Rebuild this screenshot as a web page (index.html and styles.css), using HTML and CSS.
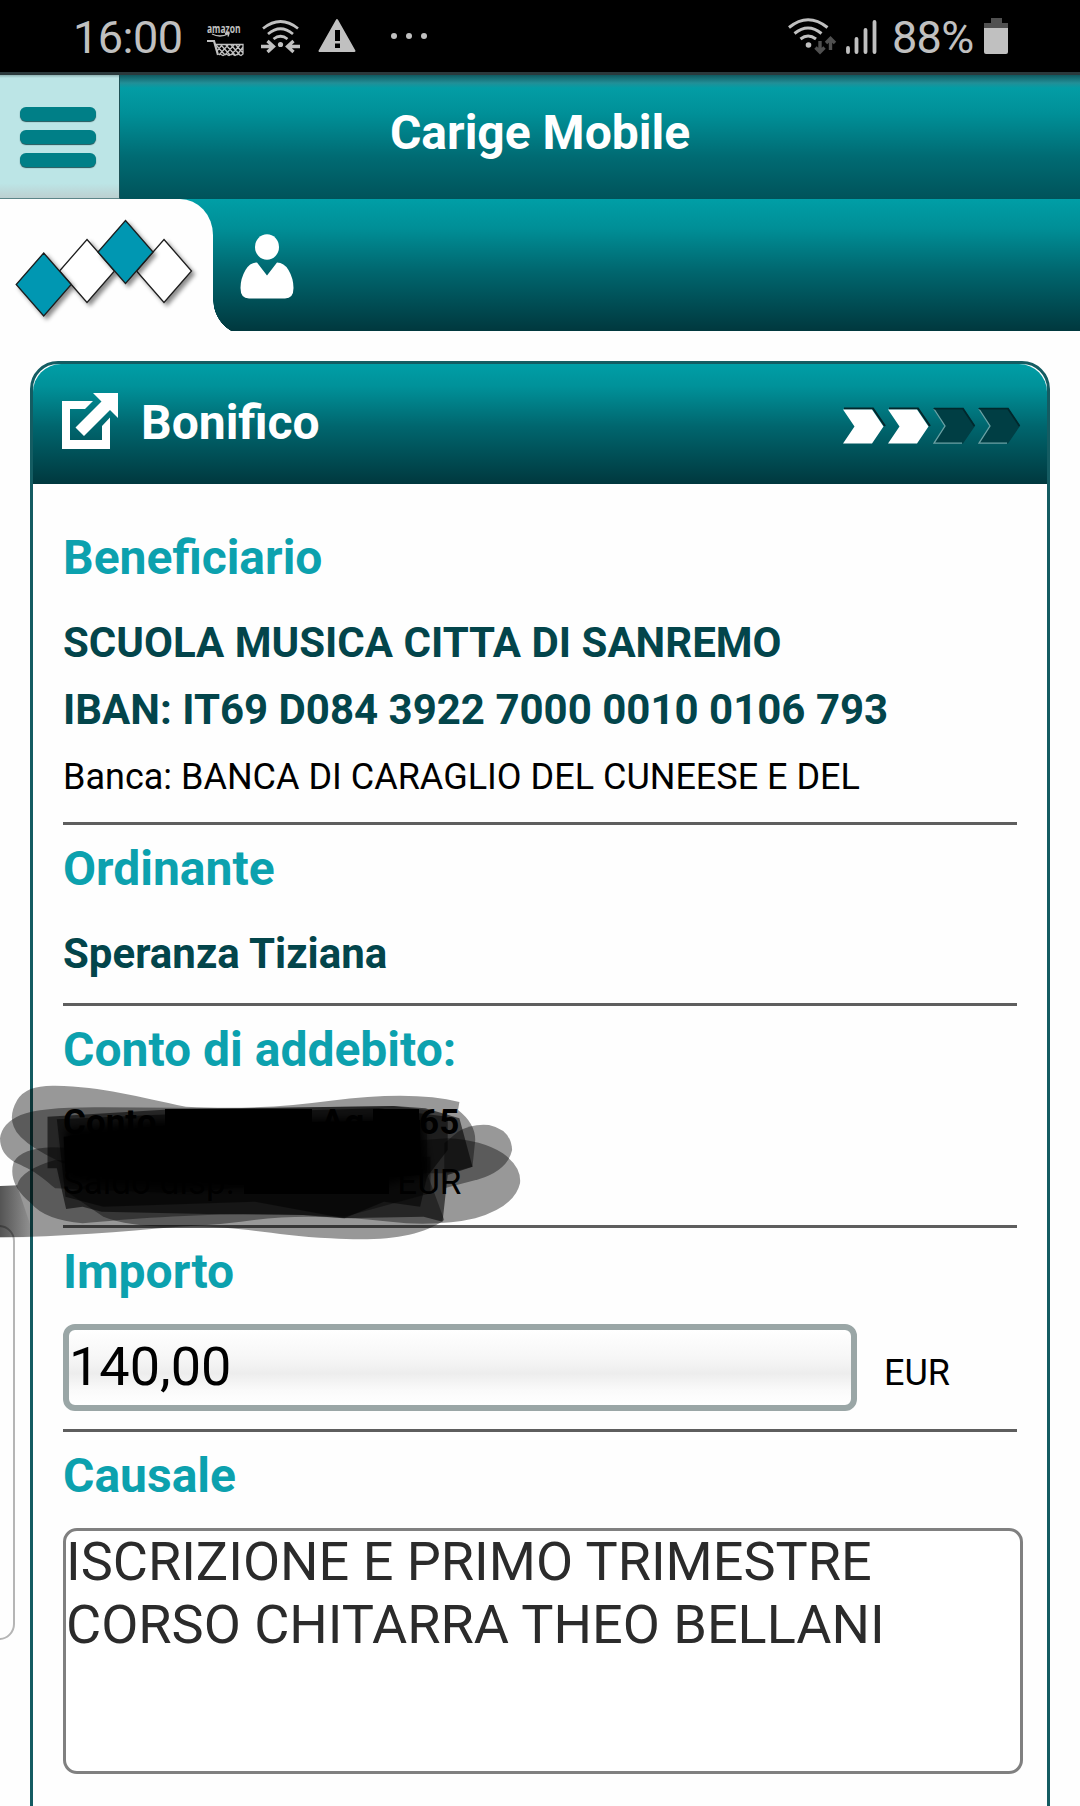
FILE: index.html
```html
<!DOCTYPE html>
<html lang="it">
<head>
    <meta charset="UTF-8">
    <meta name="viewport" content="width=device-width, initial-scale=1.0">
    <title>Carige Mobile</title>
    <link rel="stylesheet" href="styles.css">
</head>
<body>
    <div class="statusbar">
        <div class="status-left">
            <span class="clock">16:00</span>
            <svg class="ico-cart" width="38" height="40" viewBox="206 18 38 40">
                <text x="207" y="32.500" textLength="33.500" lengthAdjust="spacingAndGlyphs">amazon</text>
                <path d="M212 34q8 4 16 0M225 33.500h4l-1 3" fill="none" stroke="#c0c0c0" stroke-width="1.300"/>
                <path d="M207 41h7l4 14" fill="none" stroke="#c0c0c0" stroke-width="2.200"/>
                <path d="M214.500 44.500H243V54l-2 1.500-3-1.500-3 1.500-3-1.500-3 1.500-3-1.500-3 1.500-3-1.500M216 45l9 10M221 45l9 10M226 45l9 10M231 45l9 10M236 45l7 8M222 45l-5 6M228 45l-9 10M234 45l-9 10M240 45l-9 10M243 47l-6 8" fill="none" stroke="#c0c0c0" stroke-width="1.300"/>
            </svg>
            <svg class="ico-hotspot" width="40" height="40" viewBox="261 18 40 40" fill="none" stroke="#c0c0c0" stroke-width="2.700">
                <path d="M263 28.500q17.500-14 35 0M268 34q12.500-10.500 25 0M273.500 39q7-5.500 14 0"/>
                <circle cx="280.500" cy="44.500" r="2.600" fill="#c0c0c0" stroke="none"/>
                <path d="M261 46.500h12M267.500 41l6 5.500-6 5.500M300 46.500h-12M293.500 41l-6 5.500 6 5.500" stroke-width="3.300"/>
            </svg>
            <svg class="ico-warn" width="38" height="40" viewBox="318 18 38 40">
                <path d="M337 20l17.500 31h-35z" fill="#c0c0c0" stroke="#c0c0c0" stroke-width="2" stroke-linejoin="round"/>
                <path d="M335 30h5v11h-5zM335 43.500h5v4.500h-5z" fill="#000"/>
            </svg>
            <svg class="ico-dots" width="40" height="40" viewBox="389 18 40 40" fill="#c0c0c0">
                <circle cx="394" cy="36" r="3"/><circle cx="409" cy="36" r="3"/><circle cx="424" cy="36" r="3"/>
            </svg>
        </div>
        <div class="status-right">
            <svg width="50" height="40" viewBox="787 18 50 40" fill="none" stroke="#c0c0c0" stroke-width="3">
                <path d="M789 27.500q19-15.500 38.500 0M794.500 33.500q13.500-11 27 0M800.500 39q7.500-6 15.500 0"/>
                <circle cx="808.500" cy="45" r="2.800" fill="#c0c0c0" stroke="none"/>
                <path d="M820 41v11M815.500 47.500l4.500 4.500 4.500-4.500M830.500 50V39M826 43l4.500-4.500L835 43" stroke="#505050" stroke-width="3.400"/>
            </svg>
            <svg class="ico-signal" width="32" height="40" viewBox="846 18 32 40" stroke="#c0c0c0" stroke-width="3.800" stroke-linecap="round">
                <path d="M848 48v4M856.500 39v13M865.500 30v22M874.500 22v30"/>
            </svg>
            <span class="percent">88%</span>
            <svg width="26" height="40" viewBox="983 18 26 40">
                <path d="M991 18h11v5h6v6h-24v-6h7z" fill="#505050"/>
                <path d="M984 28h24v24q0 2-2 2h-20q-2 0-2-2z" fill="#c0c0c0"/>
            </svg>
        </div>
    </div>

    <header>
        <button class="menu"><span></span><span></span><span></span></button>
        <h1>Carige Mobile</h1>
    </header>

    <nav>
        <div class="logo">
            <svg width="213" height="132" viewBox="0 199 213 132" stroke="#1c1c1c" stroke-width="1.300">
                <path class="diamond" d="M164 239.500l27.500 31.500-27.500 31.500-27.500-31.500z" fill="#fff"/>
                <path class="diamond" d="M87 239.500l27.500 31.500L87 302.500 59.500 271z" fill="#fff"/>
                <path class="diamond" d="M125.500 220.500l27.500 31.500-27.500 31.500L98 252z" fill="#0097b2"/>
                <path class="diamond" d="M43.700 253l27.500 31.500-27.500 31.500-27.500-31.500z" fill="#0097b2"/>
            </svg>
        </div>
        <div class="userbar">
            <svg width="54" height="66" viewBox="240 234 54 66" fill="#fff">
                <ellipse cx="267" cy="247" rx="12" ry="12.700"/>
                <path d="M257 262.500L267 275.500l10-13q7 0 11.500 7.500 5 8.500 5 18 0 10.500-8.500 10.500h-36q-8.500 0-8.500-10.500 0-9.500 5-18 4.500-7.500 11.500-7.500z"/>
            </svg>
        </div>
    </nav>

    <main class="card">
        <div class="card-header">
            <svg width="58" height="58" viewBox="61 392 58 58" fill="#fff">
                <path d="M62 401h31l-8 8H70v31h32v-14l8-8.500V449H62z"/>
                <path d="M93 393h25v25l-8-8-26 26-8.500-8.500 26-26z"/>
            </svg>
            <h2>Bonifico</h2>
            <svg class="steps" width="180" height="38" viewBox="842 407 180 38">
                <path d="M844 408.500h29l12 17.500" fill="none" stroke="#04272b" stroke-width="2"/>
                <path d="M889 408.500h29l12 17.500" fill="none" stroke="#04272b" stroke-width="2"/>
                <path d="M843 409.500h29l11.500 17-11.500 17h-29l11.500-17z" fill="#fff"/>
                <path d="M888 409.500h29l11.500 17-11.500 17h-29l11.500-17z" fill="#fff"/>
                <path d="M933 408h30l12 18-12 17.500h-30l12-17.500z" fill="#003e44"/>
                <path d="M978 408h30l12 18-12 17.500h-30l12-17.500z" fill="#003e44"/>
                <path d="M934 409l11 17-11 17.200h28M979 409l11 17-11 17.200h28" fill="none" stroke="#6ba3a6" stroke-width="1.300"/>
                <path d="M934 408.700h29l11.500 17.300M979 408.700h29l11.500 17.300" fill="none" stroke="#00282c" stroke-width="1.800"/>
            </svg>
        </div>

        <div class="card-body">
            <section>
                <h3>Beneficiario</h3>
                <p class="strong">SCUOLA MUSICA CITTA DI SANREMO</p>
                <p class="strong">IBAN: IT69 D084 3922 7000 0010 0106 793</p>
                <p class="text">Banca: BANCA DI CARAGLIO DEL CUNEESE E DEL</p>
            </section>
            <section class="sender">
                <h3>Ordinante</h3>
                <p class="strong">Speranza Tiziana</p>
            </section>
            <section class="account">
                <h3>Conto di addebito:</h3>
                <p><b>Conto <span class="masked number"></span> Ag <span class="masked branch"></span>65</b></p>
                <p>Saldo disp. <span class="masked balance"></span> EUR</p>
            </section>
            <section class="amount">
                <h3>Importo</h3>
                <div class="amount-row">
                    <input type="text" value="140,00">
                    <span>EUR</span>
                </div>
            </section>
            <section class="reason">
                <h3>Causale</h3>
                <textarea>ISCRIZIONE E PRIMO TRIMESTRE
CORSO CHITARRA THEO BELLANI</textarea>
            </section>
        </div>
    </main>

    <!-- edge panel handle -->
    <div class="edge-handle"></div>

    <!-- marker strokes over the account data -->
    <svg class="marker" width="540" height="240" viewBox="0 0 1568 720" preserveAspectRatio="none">
        <defs>
            <linearGradient id="edge"><stop offset="0" stop-opacity=".45"/><stop offset="1" stop-opacity="0"/></linearGradient>
            <filter id="soft" x="-5%" y="-10%" width="110%" height="120%"><feGaussianBlur stdDeviation="12"/></filter>
        </defs>
        <g fill="#000" fill-opacity=".4">
            <path d="M50 120Q75 75 160 77C300 80 400 110 540 140C700 148 830 140 960 122Q1200 90 1334 126L1330 150Q1380 190 1380 240L1372 320 1300 340H250Q60 260 40 200Q25 165 50 120z"/>
            <path d="M60 165Q120 140 300 142L700 145 1140 138 1240 150V340L500 400 160 385C100 330 80 325 40 305Q0 280 0 235Q5 190 60 165z"/>
            <path d="M1330 215Q1370 190 1420 195Q1485 210 1487 270Q1475 330 1390 358L1290 385V250z"/>
            <path d="M1300 235Q1400 240 1460 280Q1515 320 1510 370Q1495 440 1380 475Q1300 495 1180 490C1000 470 860 460 700 485Q420 520 300 470L200 400 400 300z"/>
            <path d="M40 305Q65 265 150 262L1250 290V400L1000 470 880 465C650 455 400 475 240 490Q130 480 90 430Q20 370 40 305z"/>
            <path d="M0 378L50 375Q60 330 160 300L1240 340 1290 480C1220 530 1120 545 960 535C780 525 690 495 520 500C350 515 180 530 0 532z"/>
        </g>
        <path d="M0 378H50L100 532H0z" fill="url(#edge)"/>
        <path d="M138 170L500 148 1145 138 1235 145 1334 175 1372 320 1300 345 1285 485 1230 470 995 475 880 465 600 462 295 455 240 440 192 447 165 325H138z" fill-opacity=".58"/>
        <path d="M165 178L560 160 1100 145 1300 170V270L1240 350 1220 440 1115 425 1000 475 740 425 300 440 190 410z" fill-opacity=".55"/>
        <path d="M190 205L430 182 800 178 1220 172 1245 340 1120 375 850 380 500 385 190 365z" filter="url(#soft)"/>
        <path d="M185 230L500 195 1220 180V345L700 375 190 335z"/>
    </svg>
</body>
</html>
```
FILE: styles.css
```css
* {
    box-sizing: border-box;
}
body {
    margin: 0;
    height: 1806px;
    overflow: hidden;
    background-color: #fefefe;
    font-family: Roboto, 'Liberation Sans', sans-serif;
    position: relative;
}
h1, h2, h3, p {
    margin: 0;
}
svg {
    display: block;
    flex-shrink: 0;
    overflow: visible;
}
.statusbar {
    height: 75px;
    background-color: #000;
    border-bottom: 3px solid #2b393c;
    color: #c0c0c0;
    display: flex;
    justify-content: space-between;
    padding: 18px 71px 0 73px;
    font-size: 45px;
    line-height: 39px;
}
.status-left, .status-right {
    display: flex;
}
.clock {
    width: 133px;
    letter-spacing: -0.5px;
}
.ico-cart text {
    font-family: 'Open Sans', sans-serif;
    font-size: 12px;
    font-weight: bold;
    fill: #c0c0c0;
}
.ico-hotspot {
    margin-left: 17px;
}
.ico-warn {
    margin-left: 17px;
}
.ico-dots {
    margin-left: 33px;
}
.ico-signal {
    margin-left: 9px;
}
.percent {
    width: 91px;
    margin-left: 14px;
    letter-spacing: -0.7px;
}
header {
    height: 124px;
    display: flex;
    background: linear-gradient(#0f5a61 0, #228f97 8px, #039da5 13px, #008f97 32%, #006b73 66%, #00535a 100%);
}
.menu {
    width: 120px;
    padding: 32px 23px 0 20px;
    border: none;
    border-right: 1px solid #1e5156;
    border-bottom: 1px solid #5b8588;
    background: linear-gradient(#8fb3b4, #bce5e6 3px, #bce5e6 88%, #bccfd0);
    display: flex;
    flex-direction: column;
    gap: 9px;
}
.menu span {
    height: 14px;
    width: 76px;
    border-radius: 6px;
    background-color: #007f87;
    box-shadow: 0 1px 1px #1f5559;
}
h1 {
    width: 840px;
    padding-top: 30px;
    text-align: center;
    font-size: 48px;
    line-height: 56px;
    color: #fff;
}
nav {
    height: 132px;
    display: flex;
    background: linear-gradient(#009ea6, #008f97 22%, #00666e 55%, #00383e 100%);
}
.logo {
    width: 213px;
    background-color: #fefefe;
    border-top-right-radius: 33px 36px;
}
.diamond {
    filter: drop-shadow(3px 3px 2px rgba(0, 0, 0, 0.45));
}
.userbar {
    flex: 1;
    padding: 35px 0 0 27px;
    /* white notch under the tab */
    background: radial-gradient(circle 36px at 36px 0, transparent 35.5px, #fefefe 36px) 0 100% / 24px 31px no-repeat;
}
.card {
    margin: 30px 30px 0;
    height: 1500px;
    border: 3px solid #145c62;
    border-radius: 28px;
}
.card-header {
    height: 120px;
    display: flex;
    padding: 28px 25px 0 28px;
    border-radius: 28px 28px 0 0;
    background: linear-gradient(#009ea6, #00929a 18%, #00666e 52%, #00383e 100%);
}
.card-header h2 {
    flex: 1;
    margin-left: 22px;
    padding-top: 3px;
    font-size: 48px;
    line-height: 56px;
    color: #fff;
}
.steps {
    margin-top: 15px;
}
.card-body {
    padding: 30px 30px 0;
}
section {
    padding: 16px 0 15px;
    border-bottom: 3px solid #5e5e5e;
}
h3 {
    font-size: 48px;
    line-height: 56px;
    color: #0ca1ae;
    margin-bottom: 23px;
}
.strong {
    font-size: 42px;
    line-height: 67px;
    font-weight: bold;
    color: #03454b;
}
.text {
    font-size: 36px;
    line-height: 60px;
    margin-top: 4px;
}
.sender {
    padding-bottom: 16px;
}
.account {
    padding-bottom: 12px;
}
.account h3 {
    margin-bottom: 15px;
}
.account p {
    font-size: 35px;
    line-height: 60px;
    white-space: nowrap;
}
.masked {
    display: inline-block;
    height: 25px;
    background-color: #000;
}
.number {
    width: 147px;
}
.branch {
    width: 46px;
}
.balance {
    width: 145px;
}
.amount {
    padding-bottom: 18px;
}
.amount h3, .reason h3 {
    margin-bottom: 24px;
}
.amount-row {
    display: flex;
    gap: 27px;
    font-size: 36px;
    line-height: 98px;
    height: 87px;
}
input {
    width: 794px;
    height: 87px;
    padding: 0 0 2px;
    border: 6px solid #9aa6a6;
    border-radius: 12px;
    background: linear-gradient(#fff, #f6f6f6 38%, #ededed 58%, #fafafa 80%, #fff);
    font-family: inherit;
    font-size: 54px;
    line-height: 70px;
}
.reason {
    border: none;
}
textarea {
    display: block;
    width: 960px;
    height: 246px;
    padding: 0;
    border: 3px solid #808080;
    border-radius: 14px;
    background-color: #fff;
    resize: none;
    overflow: hidden;
    font-family: inherit;
    font-size: 54px;
    line-height: 62.6px;
    color: #2b2b2b;
}
.edge-handle {
    position: absolute;
    left: -30px;
    top: 1225px;
    width: 45px;
    height: 415px;
    border: 2px solid #b5b5b5;
    border-radius: 16px;
}
.marker {
    position: absolute;
    left: 0;
    top: 1060px;
}
```
